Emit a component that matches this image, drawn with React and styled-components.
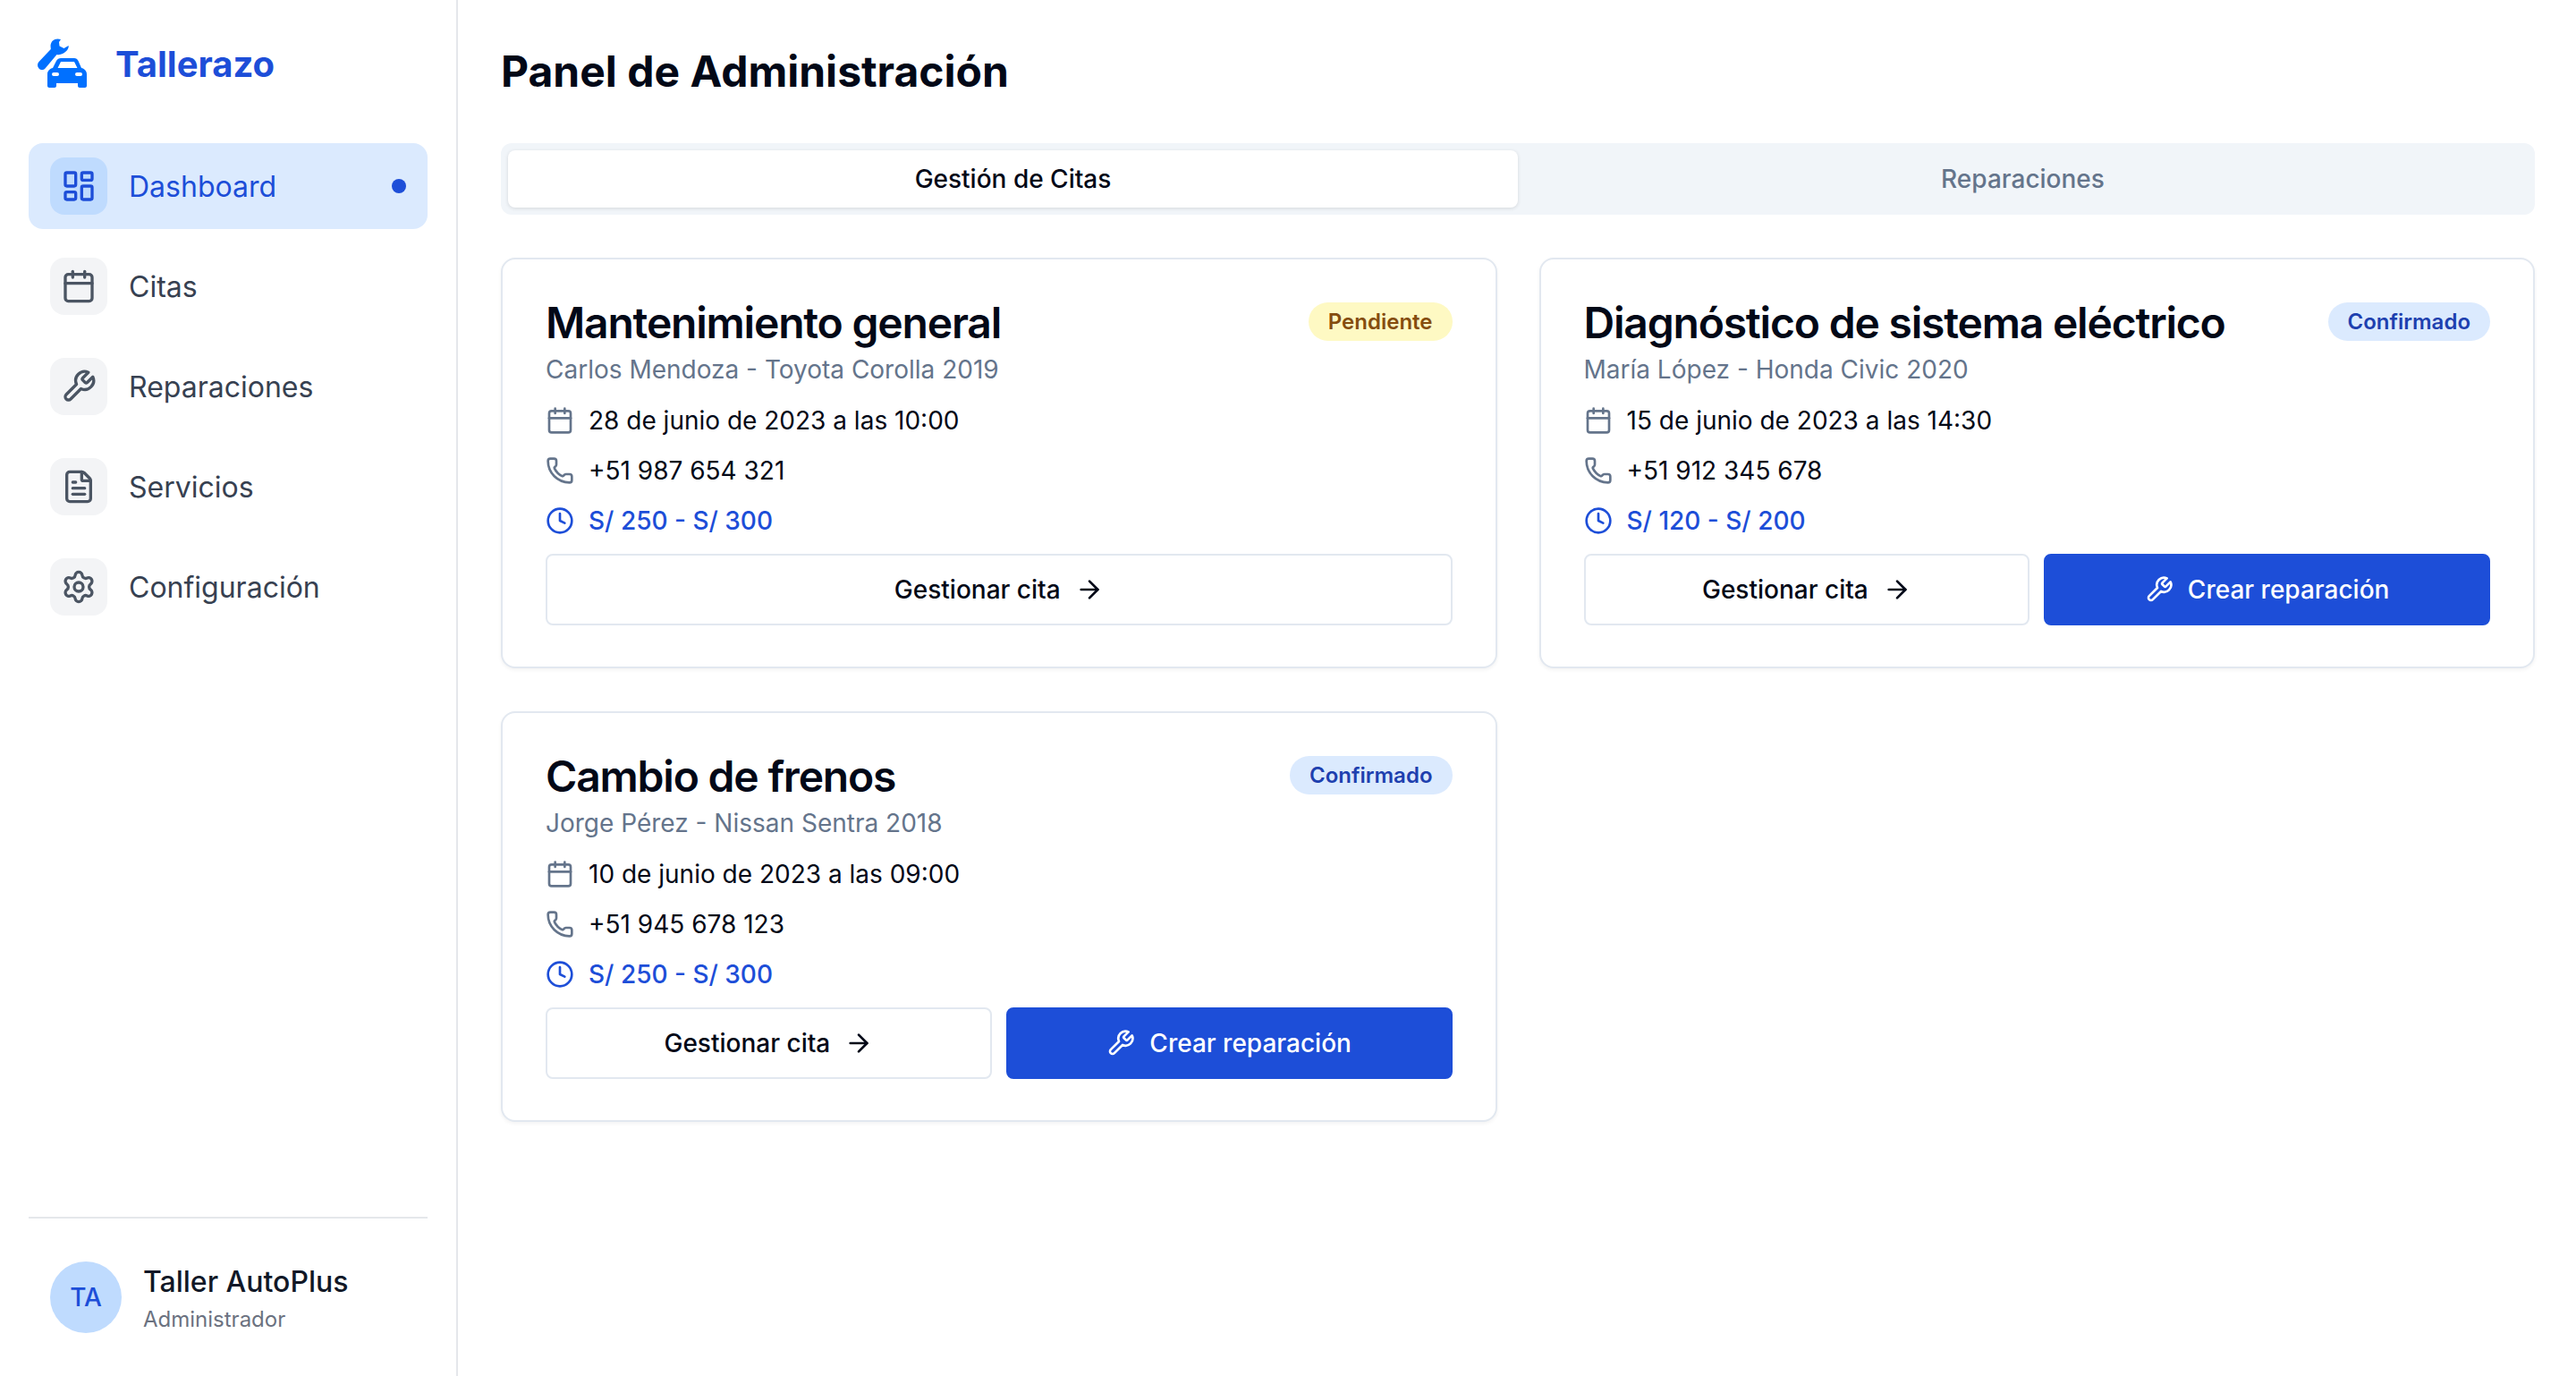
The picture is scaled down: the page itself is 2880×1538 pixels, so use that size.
import React from 'react';
import styled, { createGlobalStyle } from 'styled-components';
import { LayoutDashboard, Calendar, FileText, Settings, Phone, Clock, ArrowRight } from 'lucide-react';

const Global = createGlobalStyle`
  html, body { margin: 0; padding: 0; background: #fff; }
  body { font-family: Inter, "Liberation Sans", sans-serif; color: #020817; }
  * { box-sizing: border-box; }
`;
const Shell = styled.div`display: flex; width: 2880px; height: 1538px; overflow: hidden;`;
const Side = styled.aside`width: 512px; flex: none; border-right: 2px solid #e5e7eb; padding: 32px 32px 48px; display: flex; flex-direction: column;`;
const Brand = styled.div`display: flex; align-items: center; gap: 19px; height: 74px; margin: 0 0 54px -2px; color: #0070ff; svg { flex: none; margin-top: 2px; }`;
const BrandName = styled.span`font-size: 40px; font-weight: 700; color: #1d4ed8; margin-top: 4px;`;
const Nav = styled.nav`display: flex; flex-direction: column; gap: 16px; flex: 1;`;
const Item = styled.div`display: flex; align-items: center; gap: 24px; height: 96px; padding: 0 24px; border-radius: 16px; background: ${p => p.$active ? '#dbeafe' : 'transparent'}; color: ${p => p.$active ? '#1d4ed8' : '#374151'}; font-size: 32px;`;
const IconBox = styled.span`width: 64px; height: 64px; border-radius: 16px; display: flex; align-items: center; justify-content: center; background: ${p => p.$active ? '#bfdbfe' : '#f3f4f6'}; color: ${p => p.$active ? '#1d4ed8' : '#4b5563'};`;
const Dot = styled.span`width: 16px; height: 16px; border-radius: 50%; background: #1d4ed8; margin-left: auto;`;
const User = styled.div`border-top: 2px solid #e5e7eb; padding: 48px 24px 0; display: flex; align-items: center; gap: 24px;`;
const Avatar = styled.div`width: 80px; height: 80px; border-radius: 50%; background: #bfdbfe; color: #1d4ed8; display: flex; align-items: center; justify-content: center; font-size: 28px; font-weight: 500;`;
const UserText = styled.div`height: 80px; padding-top: 3px;`;
const UserName = styled.div`font-size: 32px; font-weight: 500; line-height: 40px; color: #111827;`;
const UserRole = styled.div`font-size: 24px; color: #6b7280; line-height: 36px; margin-top: 4px;`;
const Main = styled.main`flex: 1; padding: 49px 46px 48px 48px;`;
const Title = styled.h1`margin: 0 0 49px; font-size: 48px; font-weight: 700; line-height: 62px;`;
const Tabs = styled.div`display: flex; height: 80px; padding: 8px; background: #f1f5f9; border-radius: 12px; margin-bottom: 48px;`;
const Tab = styled.div`flex: 1; display: flex; align-items: center; justify-content: center; font-size: 28px; font-weight: 500; border-radius: 8px; color: ${p => p.$active ? '#020817' : '#64748b'}; background: ${p => p.$active ? '#fff' : 'transparent'}; box-shadow: ${p => p.$active ? '0 1px 4px rgba(0,0,0,.12)' : 'none'};`;
const Grid = styled.div`display: grid; grid-template-columns: 1fr 1fr; gap: 48px 47px; align-items: start;`;
const Card = styled.section`height: 459px; border: 2px solid #e2e8f0; border-radius: 16px; padding: 48px 48px 45px; box-shadow: 0 2px 4px rgba(0,0,0,.05); background: #fff;`;
const Head = styled.div`display: flex; justify-content: space-between; align-items: flex-start;`;
const CardTitle = styled.h2`margin: 0; font-size: 48px; font-weight: 600; line-height: 46px; letter-spacing: -1.2px;`;
const Badge = styled.span`height: 43px; padding: 0 22px; border-radius: 22px; display: flex; align-items: center; font-size: 24px; font-weight: 600; color: ${p => p.$kind === 'p' ? '#854d0e' : '#1e40af'}; background: ${p => p.$kind === 'p' ? '#fef9c3' : '#dbeafe'};`;
const Sub = styled.div`font-size: 28px; color: #64748b; margin: 9px 0 9px; line-height: 40px;`;
const Info = styled.div`display: flex; align-items: center; gap: 16px; font-size: 28px; height: 56px; color: ${p => p.$blue ? '#1d4ed8' : '#020817'}; font-weight: ${p => p.$blue ? 500 : 400}; svg { color: ${p => p.$blue ? '#1d4ed8' : '#64748b'}; }`;
const Actions = styled.div`display: flex; gap: 16px; margin-top: 9px;`;
const Btn = styled.button`flex: 1; height: 80px; border-radius: 8px; font: 500 28px Inter, sans-serif; display: flex; align-items: center; justify-content: center; gap: 16px; border: 2px solid ${p => p.$primary ? '#1d4ed8' : '#e2e8f0'}; background: ${p => p.$primary ? '#1d4ed8' : '#fff'}; color: ${p => p.$primary ? '#fff' : '#020817'};`;

const Wrench = ({ size = 24 }) => (
  <svg width={size} height={size} viewBox="0 0 24 24" fill="none" stroke="currentColor" strokeWidth="2" strokeLinecap="round" strokeLinejoin="round">
    <path d="M14.7 6.3a1 1 0 0 0 0 1.4l1.6 1.6a1 1 0 0 0 1.4 0l3.77-3.77a6 6 0 0 1-7.94 7.94l-6.91 6.91a2.12 2.12 0 0 1-3-3l6.91-6.91a6 6 0 0 1 7.94-7.94l-3.76 3.76z" />
  </svg>
);

const Logo = () => (
  <svg width="80" height="80" viewBox="0 0 80 80" fill="currentColor" fillRule="evenodd">
    <path d="M38 14C32 12 27 15 26.5 21L26.8 25L13.5 39C11.5 41 11.5 44.5 13.5 46.5C15.5 48.5 18.5 48.5 20.5 46.5L33.5 31C36 31.5 38 31 40 30C44 28 47 25 46.7 21L41.5 24L36.5 21.5L36 17Z" />
    <path d="M38 35H53C55 35 56.5 36 57.5 38L61 46C64 46.5 67 49 67 53V66C67 67 66 68 65 68H59C58 68 57 67 57 66V63H33V66C33 67 32 68 31 68H25C24 68 23 67 23 66V53C23 49 26 46.5 29 46L33 38C34 36 36 35 38 35ZM38 39H53L56.5 46H34.5ZM30 51h4a2 2 0 0 1 0 4h-4a2 2 0 0 1 0-4ZM56 51h4a2 2 0 0 1 0 4h-4a2 2 0 0 1 0-4Z" />
  </svg>
);

const items = [['Dashboard', LayoutDashboard, true], ['Citas', Calendar], ['Reparaciones', Wrench], ['Servicios', FileText], ['Configuración', Settings]];
const cards = [
  { t: 'Mantenimiento general', s: 'Carlos Mendoza - Toyota Corolla 2019', d: '28 de junio de 2023 a las 10:00', ph: '+51 987 654 321', pr: 'S/ 250 - S/ 300', b: 'Pendiente', k: 'p' },
  { t: 'Diagnóstico de sistema eléctrico', s: 'María López - Honda Civic 2020', d: '15 de junio de 2023 a las 14:30', ph: '+51 912 345 678', pr: 'S/ 120 - S/ 200', b: 'Confirmado', c: true },
  { t: 'Cambio de frenos', s: 'Jorge Pérez - Nissan Sentra 2018', d: '10 de junio de 2023 a las 09:00', ph: '+51 945 678 123', pr: 'S/ 250 - S/ 300', b: 'Confirmado', c: true },
];

export default function App() {
  return (
    <Shell>
      <Global />
      <Side>
        <Brand><Logo /><BrandName>Tallerazo</BrandName></Brand>
        <Nav>
          {items.map(([n, I, a]) => (
            <Item key={n} $active={a}><IconBox $active={a}><I size={40} /></IconBox>{n}{a && <Dot />}</Item>
          ))}
        </Nav>
        <User><Avatar>TA</Avatar><UserText><UserName>Taller AutoPlus</UserName><UserRole>Administrador</UserRole></UserText></User>
      </Side>
      <Main>
        <Title>Panel de Administración</Title>
        <Tabs><Tab $active>Gestión de Citas</Tab><Tab>Reparaciones</Tab></Tabs>
        <Grid>
          {cards.map(c => (
            <Card key={c.t}>
              <Head><CardTitle>{c.t}</CardTitle><Badge $kind={c.k}>{c.b}</Badge></Head>
              <Sub>{c.s}</Sub>
              <Info><Calendar size={32} />{c.d}</Info>
              <Info><Phone size={32} />{c.ph}</Info>
              <Info $blue><Clock size={32} />{c.pr}</Info>
              <Actions>
                <Btn>Gestionar cita <ArrowRight size={32} /></Btn>
                {c.c && <Btn $primary><Wrench size={32} />Crear reparación</Btn>}
              </Actions>
            </Card>
          ))}
        </Grid>
      </Main>
    </Shell>
  );
}
